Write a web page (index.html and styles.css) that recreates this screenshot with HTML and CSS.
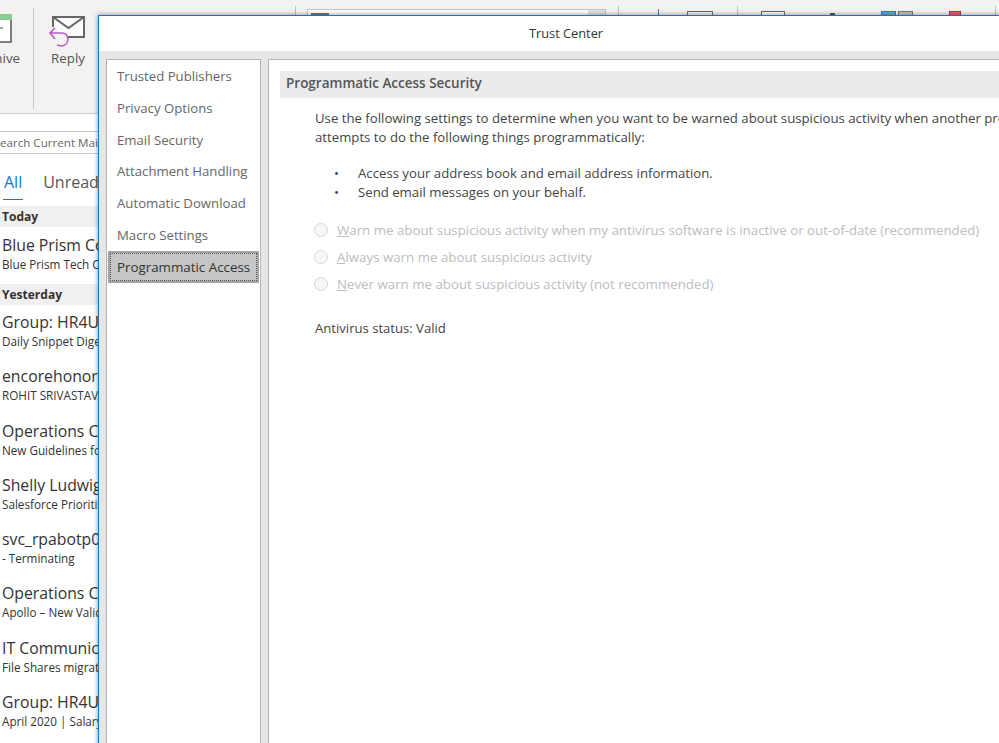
FILE: index.html
```html
<!DOCTYPE html>
<html lang="en">
<head>
<meta charset="utf-8">
<title>Trust Center</title>
<link rel="stylesheet" href="styles.css">
</head>
<body>
<div class="desktop">
  <header class="ribbon">
    <div class="archive">
      <svg class="archive-icon" width="14" height="29" viewBox="0 0 14 29"><path d="M0 28H12V6H0Z" fill="#fff"/><path d="M0 28H12V6" fill="none" stroke="#555" stroke-width="1.500"/><rect x="0" y="0" width="13" height="6" fill="#86cf8e"/><path d="M0 14H4" stroke="#555"/></svg>
      <span class="ribbon-label">Archive</span>
    </div>
    <div class="ribbon-sep"></div>
    <div class="reply">
      <svg width="38" height="32" viewBox="0 0 38 32"><path d="M4 12V2H35V22H18Z" fill="#fbfbfb"/><path d="M4 12V2H35V22H18M4 2L19.500 13L35 2" fill="none" stroke="#666" stroke-width="2"/><path d="M6 13L1 18L6 24M1 18H13C21 18 21 31 12 31L8 30" fill="none" stroke="#b85fc6" stroke-width="1.600"/></svg>
      <span class="ribbon-label">Reply</span>
    </div>
    <div class="ribbon-top">
      <div class="sep-top"></div>
      <div class="combo"><span class="combo-icon"></span><span class="combo-arrow"></span></div>
      <div class="sep-top sep-a"></div>
      <div class="blue-tick"></div>
      <div class="mini folder"></div>
      <div class="sep-top sep-b"></div>
      <div class="mini box"></div>
      <div class="mini up"></div>
      <div class="mini blue"></div>
      <div class="mini grey"></div>
      <div class="mini red"></div>
      <div class="sep-top sep-c"></div>
    </div>
  </header>
  <div class="search-band"><div class="search">earch Current Mail</div></div>
  <nav class="tabs"><span class="tab active">All</span><span class="tab">Unread</span></nav>
  <section class="mail">
    <h2 class="group">Today</h2>
    <div class="mail-row first"><div class="from">Blue Prism Community</div><div class="subject">Blue Prism Tech Community</div></div>
    <h2 class="group">Yesterday</h2>
    <div class="mail-row"><div class="from">Group: HR4U</div><div class="subject">Daily Snippet Digest</div></div>
    <div class="mail-row"><div class="from">encorehonors</div><div class="subject">ROHIT SRIVASTAVA</div></div>
    <div class="mail-row"><div class="from">Operations Comm</div><div class="subject">New Guidelines for</div></div>
    <div class="mail-row"><div class="from">Shelly Ludwig</div><div class="subject">Salesforce Prioritization</div></div>
    <div class="mail-row"><div class="from">svc_rpabotp01</div><div class="subject">- Terminating</div></div>
    <div class="mail-row"><div class="from">Operations Comm</div><div class="subject">Apollo – New Validation</div></div>
    <div class="mail-row"><div class="from">IT Communications</div><div class="subject">File Shares migration</div></div>
    <div class="mail-row"><div class="from">Group: HR4U</div><div class="subject">April 2020 | Salary</div></div>
  </section>

  <div class="dialog">
    <div class="title">Trust Center</div>
    <div class="panes">
      <ul class="side">
        <li>Trusted Publishers</li>
        <li>Privacy Options</li>
        <li>Email Security</li>
        <li>Attachment Handling</li>
        <li>Automatic Download</li>
        <li>Macro Settings</li>
        <li class="selected">Programmatic Access</li>
      </ul>
      <main class="content">
        <h1 class="heading">Programmatic Access Security</h1>
        <div class="body">
          <p class="intro">Use the following settings to determine when you want to be warned about suspicious activity when another program attempts to do the following things programmatically:</p>
          <ul class="bullets">
            <li>Access your address book and email address information.</li>
            <li>Send email messages on your behalf.</li>
          </ul>
          <div class="options">
            <label class="option"><span class="radio"></span><span><u>W</u>arn me about suspicious activity when my antivirus software is inactive or out-of-date (recommended)</span></label>
            <label class="option"><span class="radio"></span><span><u>A</u>lways warn me about suspicious activity</span></label>
            <label class="option"><span class="radio"></span><span><u>N</u>ever warn me about suspicious activity (not recommended)</span></label>
          </div>
          <p class="status">Antivirus status: Valid</p>
        </div>
      </main>
    </div>
  </div>
</div>
</body>
</html>
```
FILE: styles.css
```css
* { box-sizing: border-box; }
html, body { margin: 0; padding: 0; }
body { font-family: "Open Sans", "Noto Sans", sans-serif; color: #333; background: #fff; }
.desktop { position: relative; width: 999px; height: 743px; overflow: hidden; background: #fff; }

.ribbon { height: 114px; background: #f3f2f1; border-bottom: 1px solid #d2d0ce; display: flex; align-items: flex-start; }
.archive { width: 33px; display: flex; flex-direction: column; align-items: flex-end; padding: 14px 13px 0 0; flex: none; }
.archive-icon { display: block; margin-right: 7px; flex: none; }
.ribbon-label { font-size: 13.300px; color: #555; line-height: 18px; white-space: nowrap; flex: none; }
.archive .ribbon-label { margin-top: 6px; }
.ribbon-sep { width: 1px; height: 101px; margin-top: 8px; background: #c8c8c8; flex: none; }
.reply { width: 68px; display: flex; flex-direction: column; align-items: center; padding-top: 15px; flex: none; }
.reply svg { display: block; }
.reply .ribbon-label { margin-top: 2px; }

.ribbon-top { display: flex; align-items: flex-start; flex: none; margin-left: 193px; }
.sep-top { width: 1px; height: 10px; margin-top: 6px; background: #c0c0c0; flex: none; }
.sep-a { margin-left: 12px; }
.sep-b { margin-left: 24px; }
.sep-c { margin-left: 34px; }
.combo { display: flex; justify-content: space-between; width: 299px; height: 7px; margin: 9px 0 0 11px; background: #fff; border: 1px solid #c4c4c4; border-bottom: 0; }
.combo-icon { width: 18px; height: 3px; margin: 3px 0 0 3px; background: #777; }
.combo-arrow { width: 17px; background: #e2e2e2; }
.blue-tick { width: 1px; height: 7px; margin: 9px 0 0 39px; background: #2f7fc4; }
.mini { flex: none; border-bottom: 0; }
.folder { width: 26px; height: 5px; margin: 11px 0 0 28px; background: #f3f2f1; border: 1px solid #666; border-bottom: 0; }
.box { width: 24px; height: 5px; margin: 11px 0 0 23px; background: #fbfbfb; border: 1px solid #666; border-bottom: 0; }
.up { width: 5px; height: 2px; margin: 13px 0 0 45px; background: #555; }
.blue { width: 15px; height: 5px; margin: 11px 0 0 46px; background: #6fa5d8; border: 1px solid #2b7cd3; border-bottom: 0; }
.grey { width: 15px; height: 5px; margin: 11px 0 0 2px; background: #c4c4c4; border: 1px solid #777; border-bottom: 0; }
.red { width: 12px; height: 5px; margin: 11px 0 0 36px; background: #e0656e; border: 1px solid #c9303c; border-bottom: 0; }

.search-band { height: 40px; padding-top: 17px; }
.search { width: 130px; height: 23px; border: 1px solid #c8c8c8; border-left: 0; font-size: 11.600px; line-height: 21px; color: #666; background: #fff; white-space: nowrap; overflow: hidden; }
.tabs { display: flex; gap: 20px; padding: 17px 0 0 3px; height: 52px; }
.tab { font-size: 16px; line-height: 22px; color: #555; height: 29px; white-space: nowrap; }
.tab.active { color: #0f78d4; border-bottom: 1px solid #0f78d4; padding: 0 1px; }

.mail { width: 99px; overflow: hidden; }
.group { margin: 0; padding-left: 2px; height: 21px; background: #f0f0f0; font-size: 12px; font-weight: 700; line-height: 21px; color: #333; }
.mail-row { height: 54.300px; padding: 6px 0 0 2px; white-space: nowrap; }
.mail-row.first { height: 57px; padding-top: 7px; }
.from { font-size: 15.800px; line-height: 23px; color: #333; }
.subject { font-size: 11.700px; line-height: 15px; color: #333; }

.dialog { position: absolute; left: 98px; top: 15px; width: 936px; height: 760px; background: #e6e6e6; border: 1px solid #1b75bc; box-shadow: 0 0 5px rgba(0,0,0,.45); display: flex; flex-direction: column; }
.title { height: 35px; flex: none; background: #fff; text-align: center; font-size: 12.800px; line-height: 35px; color: #333; }
.panes { flex: 1; display: flex; gap: 7px; padding: 8px 0 0 7px; }
.side { width: 155px; flex: none; margin: 0; padding: 1px 1px 0 1px; list-style: none; background: #fff; border: 1px solid #b4b4b4; border-bottom: 0; }
.side li { height: 31.800px; padding-left: 9px; font-size: 13.200px; line-height: 31px; color: #666; white-space: nowrap; }
.side li.selected { color: #333; background: #c6c6c6; border: 2px solid #a4a4a4; outline: 1px dotted #555; outline-offset: -3px; height: 32px; margin-top: -1px; padding-left: 7px; font-size: 13.350px; line-height: 29px; }
.content { flex: 1; background: #fff; border: 1px solid #b4b4b4; border-bottom: 0; border-right: 0; padding-top: 11px; }
.heading { margin: 0 0 0 11px; height: 27px; padding-left: 6px; background: #ebebeb; font-size: 13.500px; font-weight: 600; line-height: 25px; color: #555; white-space: nowrap; }
.body { padding: 11px 0 0 46px; }
.intro { margin: 0; font-size: 13.200px; line-height: 19px; color: #444; width: 760px; }
.bullets { margin: 17px 0 0; padding: 0 0 0 19px; list-style: none; font-size: 13.200px; line-height: 19px; color: #444; white-space: nowrap; }
.bullets li { display: flex; }
.bullets li::before { content: "•"; width: 24px; flex: none; }
.options { margin-top: 14px; }
.option { display: flex; align-items: center; gap: 9px; height: 27px; margin-left: -1px; font-size: 13.300px; color: #bdbdbd; white-space: nowrap; }
.radio { width: 14px; height: 14px; border-radius: 50%; border: 1px solid #d8d8d8; background: #f7f7f7; flex: none; }
.status { margin: 22px 0 0; font-size: 13.100px; line-height: 19px; color: #444; }
```
